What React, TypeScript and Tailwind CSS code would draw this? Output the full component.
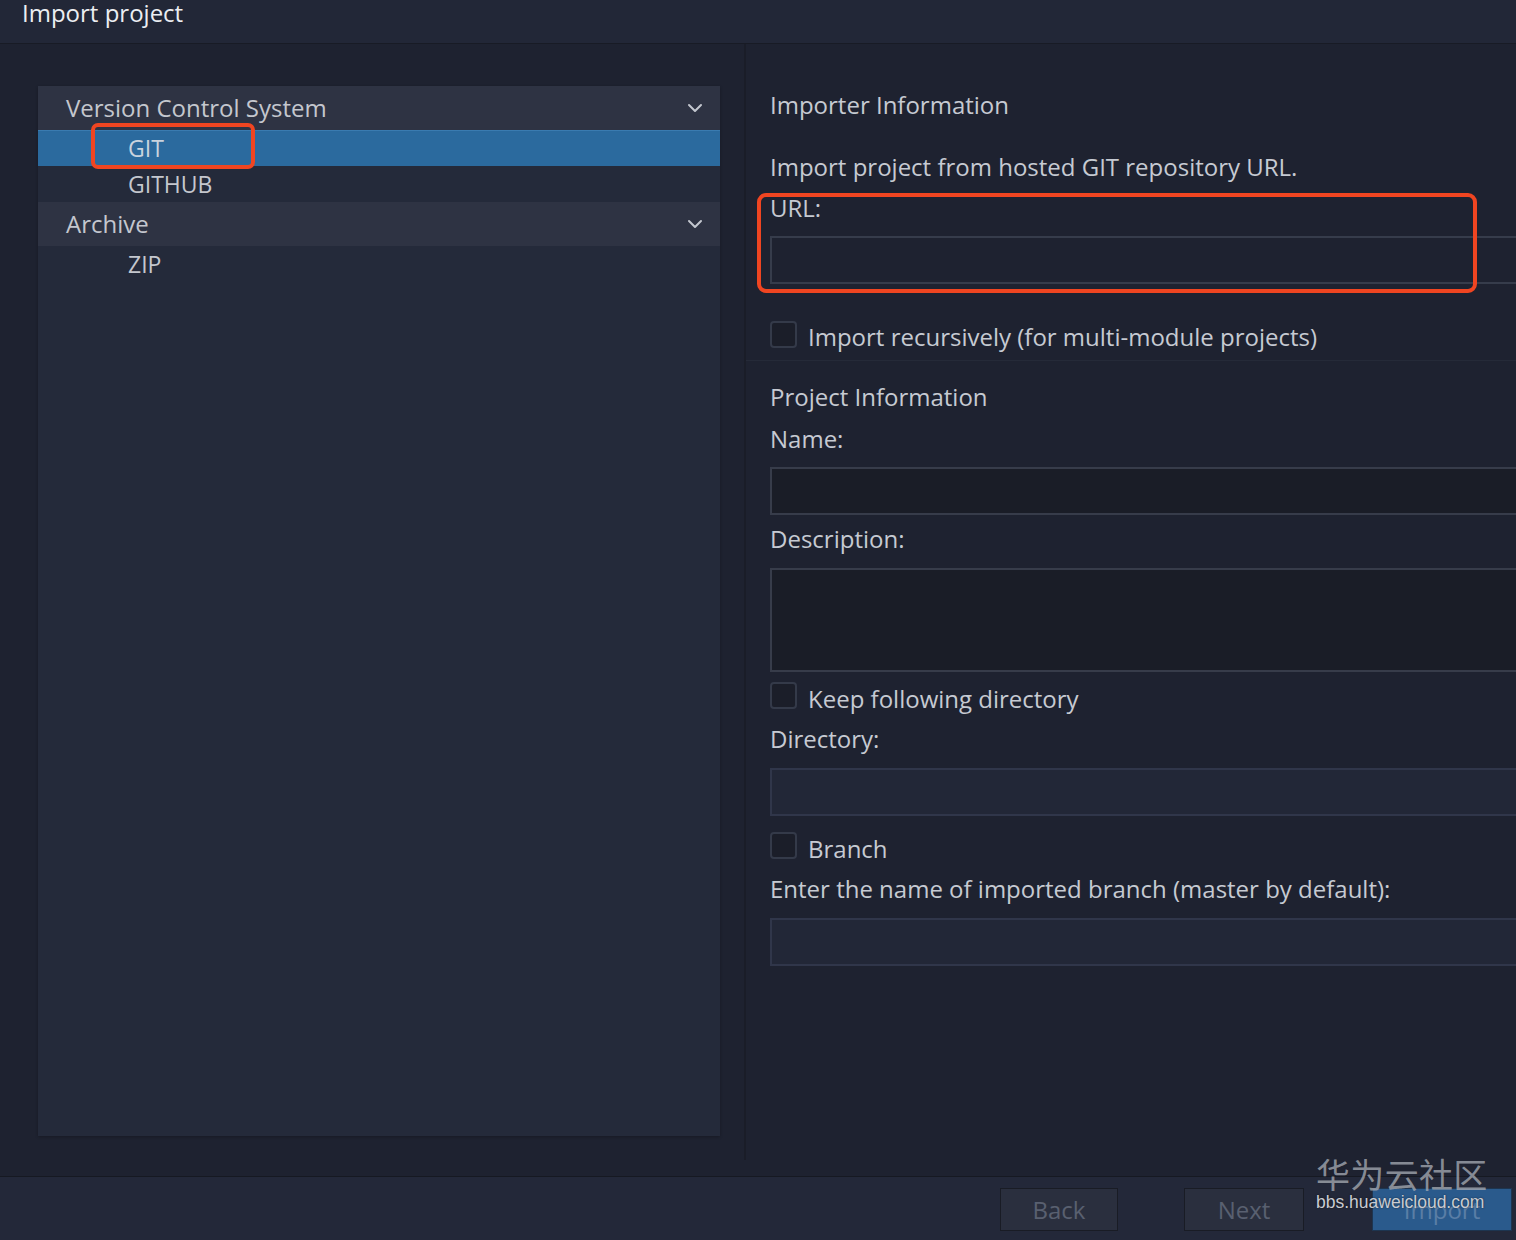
import React from "react";

const font = { fontFamily: '"Open Sans", "Noto Sans", "Noto Sans CJK SC", sans-serif' };

const Chevron = () => (
  <svg width="16" height="10" viewBox="0 0 16 10" fill="none">
    <path d="M2 2l6 6 6-6" stroke="#c3c7cf" strokeWidth="2" strokeLinecap="round" strokeLinejoin="round" />
  </svg>
);

const Checkbox = () => (
  <div className="h-[27px] w-[27px] shrink-0 rounded-[4px] border-2 border-[#343a49] bg-[#1b1e29]" />
);

const Label = ({ children, className = "" }: { children: React.ReactNode; className?: string }) => (
  <div className={"h-[32px] text-[24px] leading-[32px] text-[#c6cad2] " + className}>{children}</div>
);

export default function App() {
  return (
    <div style={font} className="relative flex h-[1240px] w-[1516px] flex-col overflow-hidden bg-[#1e2230]">
      {/* ヘッダー */}
      <div className="h-[44px] shrink-0 border-b border-[#181b25] bg-[#222737] pl-[22px]">
        <div className="-mt-[3px] text-[24px] leading-[32px] text-[#eceef2]">Import project</div>
      </div>

      {/* 本体 */}
      <div className="flex min-h-0 flex-1">
        {/* 左のツリー */}
        <div className="pb-[40px] pl-[38px] pt-[42px]">
          <div className="h-full w-[682px] bg-[#242a3a] shadow-[0_1px_3px_rgba(0,0,0,0.25)]">
            <div className="flex h-[44px] items-center justify-between bg-[#2e3343] pl-[28px] pr-[17px]">
              <span className="text-[24px] text-[#c4c7ce]">Version Control System</span>
              <Chevron />
            </div>
            <div className="flex h-[36px] items-center border-t border-[#3a7bb0] bg-[#2b6a9e] pl-[90px] text-[23px] text-[#c9d3de]">
              GIT
            </div>
            <div className="flex h-[36px] items-center pl-[90px] text-[23px] text-[#c4c7ce]">GITHUB</div>
            <div className="flex h-[44px] items-center justify-between bg-[#2e3343] pl-[28px] pr-[17px]">
              <span className="text-[24px] text-[#c4c7ce]">Archive</span>
              <Chevron />
            </div>
            <div className="flex h-[36px] items-center pl-[90px] text-[23px] text-[#c4c7ce]">ZIP</div>
          </div>
        </div>

        {/* 右のフォーム */}
        <div className="mb-[16px] ml-[24px] flex-1 border-l-2 border-[#1a1d28]">
          <div className="border-b border-[#252a38] pb-[7px] pl-[24px] pt-[45px]">
            <Label>Importer Information</Label>
            <Label className="mt-[30px]">Import project from hosted GIT repository URL.</Label>
            <Label className="mt-[9px]">URL:</Label>
            <div className="mt-[12px] h-[48px] w-[900px] border-2 border-[#363c4b] bg-[#1e2230]" />
            <div className="mt-[37px] flex items-start gap-[11px]">
              <Checkbox />
              <Label>Import recursively (for multi-module projects)</Label>
            </div>
          </div>

          <div className="pl-[24px] pt-[20px]">
            <Label>Project Information</Label>
            <Label className="mt-[10px]">Name:</Label>
            <div className="mt-[12px] h-[48px] w-[900px] border-2 border-[#373c4a] bg-[#1a1d27]" />
            <Label className="mt-[8px]">Description:</Label>
            <div className="mt-[13px] h-[104px] w-[900px] border-2 border-[#373c4a] bg-[#1a1d27]" />
            <div className="mt-[10px] flex items-start gap-[11px]">
              <Checkbox />
              <Label className="mt-[1px]">Keep following directory</Label>
            </div>
            <Label className="mt-[8px]">Directory:</Label>
            <div className="mt-[13px] h-[48px] w-[900px] border-2 border-[#30364a] bg-[#222737]" />
            <div className="mt-[16px] flex items-start gap-[11px]">
              <Checkbox />
              <Label className="mt-[1px]">Branch</Label>
            </div>
            <Label className="mt-[8px]">Enter the name of imported branch (master by default):</Label>
            <div className="mt-[13px] h-[48px] w-[900px] border-2 border-[#30364a] bg-[#222737]" />
          </div>
        </div>
      </div>

      {/* フッター */}
      <div className="flex h-[64px] shrink-0 items-start justify-end border-t border-[#161922] bg-[#232839] pr-[4px] pt-[11px]">
        <button className="h-[43px] w-[118px] border border-[#191c25] bg-[#2a2f3e] text-[24px] text-[#596070]">Back</button>
        <button className="ml-[66px] h-[43px] w-[120px] border border-[#191c25] bg-[#2a2f3e] text-[24px] text-[#596070]">Next</button>
        <button className="ml-[68px] h-[43px] w-[140px] border border-[#1d3550] bg-[#2a5a8c] text-[24px] text-[#5a7ea6]">Import</button>
      </div>

      {/* 赤い注釈枠 */}
      <div className="pointer-events-none absolute left-[91px] top-[123px] h-[46px] w-[164px] rounded-[7px] border-[4px] border-[#f04521]" />
      <div className="pointer-events-none absolute left-[757px] top-[193px] h-[100px] w-[720px] rounded-[9px] border-[4px] border-[#f04521]" />

      {/* 透かし */}
      <div className="pointer-events-none absolute left-[1316px] top-[1154px] flex flex-col">
        <span
          style={{ fontFamily: '"Noto Sans CJK SC", sans-serif' }}
          className="text-[34px] leading-[40px] tracking-[0.01em] text-[#a3a8b0]/80"
        >
          华为云社区
        </span>
        <span
          style={{ fontFamily: '"Liberation Sans", sans-serif' }}
          className="-mt-[2px] text-[17.5px] leading-[20px] text-[#c9ccd2] [text-shadow:0_0_2px_rgba(0,0,0,0.6)]"
        >
          bbs.huaweicloud.com
        </span>
      </div>
    </div>
  );
}
